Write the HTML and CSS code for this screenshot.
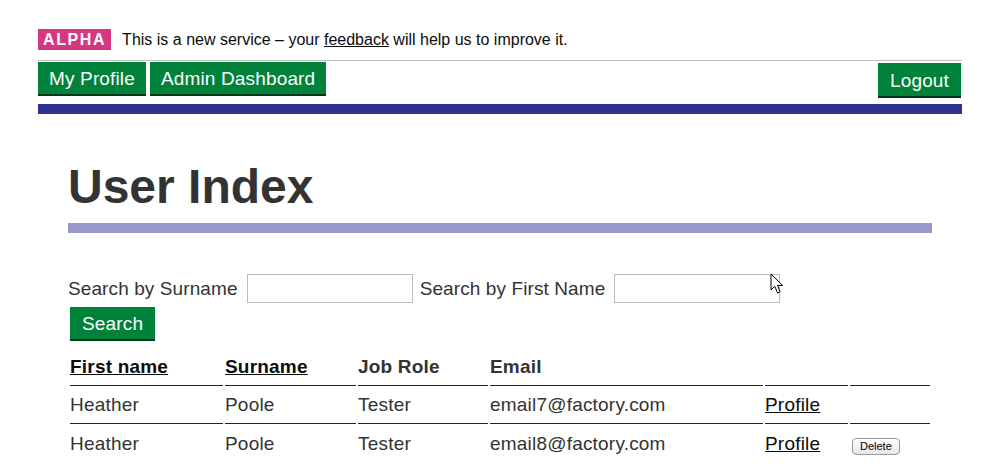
FILE: index.html
```html
<!DOCTYPE html>
<html lang="en">
<head>
<meta charset="utf-8">
<title>User Index</title>
<link rel="stylesheet" href="styles.css">
</head>
<body>
<div class="page">
  <header class="site-header">
    <div class="phase-banner">
      <strong class="phase-tag">ALPHA</strong>
      <span class="phase-text">This is a new service – your <a href="#" class="phase-link">feedback</a> will help us to improve it.</span>
    </div>
    <nav class="nav">
      <div class="nav-left">
        <a href="#" class="btn btn-nav">My Profile</a>
        <a href="#" class="btn btn-nav">Admin Dashboard</a>
      </div>
      <button type="button" class="btn btn-logout">Logout</button>
    </nav>
    <div class="header-bar"></div>
  </header>

  <main class="content">
    <h1 class="title">User Index</h1>
    <div class="title-rule"></div>

    <form class="search-form">
      <div class="search-row">
        <label class="search-label" for="surname">Search by Surname</label>
        <input class="search-input" id="surname" type="text">
        <label class="search-label" for="firstname">Search by First Name</label>
        <input class="search-input" id="firstname" type="text">
      </div>
      <button type="button" class="btn btn-search">Search</button>
    </form>

    <table class="users">
      <thead>
        <tr>
          <th class="c-first"><a href="#" class="sort-link">First name</a></th>
          <th class="c-sur"><a href="#" class="sort-link">Surname</a></th>
          <th class="c-role">Job Role</th>
          <th class="c-email">Email</th>
          <th class="c-profile"></th>
          <th class="c-action"></th>
        </tr>
      </thead>
      <tbody>
        <tr>
          <td>Heather</td>
          <td>Poole</td>
          <td>Tester</td>
          <td>email7@factory.com</td>
          <td><a href="#" class="row-link">Profile</a></td>
          <td></td>
        </tr>
        <tr class="last-row">
          <td>Heather</td>
          <td>Poole</td>
          <td>Tester</td>
          <td>email8@factory.com</td>
          <td><a href="#" class="row-link">Profile</a></td>
          <td><button type="button" class="btn-delete">Delete</button></td>
        </tr>
      </tbody>
    </table>
  </main>
</div>

<svg class="cursor" width="14" height="22" viewBox="0 0 14 22" aria-hidden="true">
  <path d="M1 1 L1 17 L4.8 13.3 L7.6 20 L10.2 18.9 L7.5 12.4 L12.6 12.4 Z" fill="#fff" stroke="#000" stroke-width="1" stroke-linejoin="round"/>
</svg>
</body>
</html>
```

FILE: styles.css
```css
* { box-sizing: border-box; }

html, body {
  margin: 0;
  padding: 0;
  background: #fff;
}

body {
  font-family: "Liberation Sans", Arial, sans-serif;
  color: #333;
  position: relative;
  min-height: 473px;
}

.page {
  width: 924px;
  margin: 0 auto;
}

/* Phase banner */
.phase-banner {
  display: flex;
  align-items: center;
  padding-top: 29px;
  padding-bottom: 10px;
  border-bottom: 1px solid #bfc1c3;
}

.phase-tag {
  display: inline-block;
  height: 21px;
  line-height: 22px;
  padding: 0 5px 0 5px;
  background: #d53880;
  color: #fff;
  font-size: 16px;
  font-weight: bold;
  letter-spacing: 1.6px;
  margin-right: 11px;
}

.phase-text {
  font-size: 16px;
  color: #0b0c0c;
  line-height: 21px;
}

.phase-link {
  color: #0b0c0c;
  text-decoration: underline;
}

/* Nav */
.nav {
  display: flex;
  justify-content: space-between;
  align-items: flex-start;
  padding-top: 1px;
}

.nav-left {
  display: flex;
  gap: 4px;
}

.btn {
  display: inline-block;
  background: #00823b;
  color: #fff;
  font-family: "Liberation Sans", Arial, sans-serif;
  font-size: 19px;
  letter-spacing: 0.15px;
  text-decoration: none;
  border: none;
  box-shadow: 0 2px 0 #003618;
  cursor: pointer;
}

.btn-nav {
  height: 32px;
  line-height: 33px;
  padding: 0 11px 0 11px;
}

.btn-logout {
  margin-top: 1px;
  height: 33px;
  line-height: 35px;
  padding: 0 12px;
  margin-right: 1px;
}

.header-bar {
  height: 10px;
  margin-top: 8px;
  background: #2e3191;
}

/* Content */
.content {
  padding: 0 30px;
}

.title {
  margin: 49px 0 0 0;
  font-size: 48px;
  line-height: 48px;
  font-weight: bold;
  color: #333;
}

.title-rule {
  height: 10px;
  margin-top: 12px;
  background: #9999c9;
}

.search-form {
  margin-top: 41px;
}

.search-row {
  display: flex;
  align-items: center;
  gap: 7px;
}

.search-label {
  font-size: 19px;
  color: #333;
  letter-spacing: 0.1px;
}

.search-input {
  width: 166px;
  height: 29px;
  border: 1px solid #bbbbbb;
  background: #fff;
  margin: 0 0 0 2px;
  padding: 0 4px;
  font-family: inherit;
  font-size: 16px;
}

.btn-search {
  margin: 4px 0 0 2px;
  height: 32px;
  line-height: 34px;
  padding: 0 12px;
}

/* Table */
.users {
  margin-top: 9px;
  width: 864px;
  border-collapse: separate;
  border-spacing: 2px;
  font-size: 19px;
  letter-spacing: 0.2px;
}

.users th,
.users td {
  text-align: left;
  padding: 4px 0 6px 0;
  line-height: 25px;
  border-bottom: 1px solid #222;
  vertical-align: baseline;
}

.users .last-row td {
  border-bottom: none;
  padding-top: 5px;
}

.users th {
  font-weight: bold;
  color: #333;
}

.users td {
  color: #333;
}

.c-first { width: 153px; }
.c-sur { width: 131px; }
.c-role { width: 130px; }
.c-email { width: 273px; }
.c-profile { width: 83px; }
.c-action { width: 80px; }

.sort-link,
.row-link {
  color: #0b0c0c;
  text-decoration: underline;
}

.btn-delete {
  margin-left: 2px;
  font-family: "Liberation Sans", Arial, sans-serif;
  font-size: 11px;
  line-height: 13px;
  height: 17px;
  padding: 1px 7px;
  letter-spacing: 0;
  color: #000;
  background: linear-gradient(#ffffff, #e6e6e6);
  border: 1px solid #9a9a9a;
  border-radius: 4px;
  vertical-align: baseline;
}

.cursor {
  position: absolute;
  left: 770px;
  top: 273px;
  pointer-events: none;
}
```
